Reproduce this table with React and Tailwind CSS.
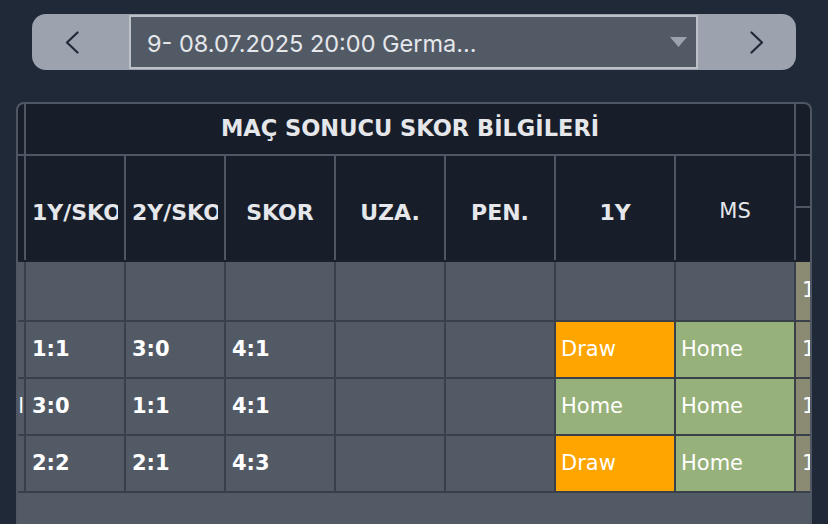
import React from 'react';

const COLS = 'grid-cols-[6px_98px_98px_108px_108px_108px_118px_118px_100px]';

const rows = [
  { h: 'h-[58px]', cells: ['', '', '', '', ''], left: '' },
  { h: 'h-[55px]', cells: ['1:1', '3:0', '4:1', '', ''], r1: 'Draw', ms: 'Home', left: '' },
  { h: 'h-[55px]', cells: ['3:0', '1:1', '4:1', '', ''], r1: 'Home', ms: 'Home', left: 'l' },
  { h: 'h-[55px]', cells: ['2:2', '2:1', '4:3', '', ''], r1: 'Draw', ms: 'Home', left: '' },
];

function resultBg(v) {
  if (v === 'Draw') return 'bg-[#ffa500]';
  if (v === 'Home') return 'bg-[#97b17a]';
  return 'bg-[#525a66]';
}

function Chevron({ dir }) {
  return (
    <svg width="14" height="23" viewBox="0 0 14 23" fill="none">
      <polyline
        points={dir === 'left' ? '12.5,1.5 2,11.5 12.5,21.5' : '1.5,1.5 12,11.5 1.5,21.5'}
        stroke="#1f2937"
        strokeWidth="2.2"
        strokeLinecap="round"
        strokeLinejoin="round"
      />
    </svg>
  );
}

export default function App() {
  return (
    <div className="w-[828px] h-[524px] overflow-hidden bg-[#1f2937] flex flex-col pt-[14px] font-['DejaVu_Sans',sans-serif]">
      {/* Maç seçici */}
      <div className="ml-[32px] w-[764px] h-[56px] shrink-0 rounded-[14px] bg-[#9ca3af] flex items-center">
        <div className="w-[97px] h-full flex items-center pl-[33px]">
          <Chevron dir="left" />
        </div>
        <div className="w-[569px] h-[54px] border-2 border-[#bcc0c7] bg-[#525a66] flex items-center justify-between pl-[16px] pr-[9px]">
          <span className="font-['Inter',sans-serif] text-[23.5px] text-[#e5e7eb] leading-none pt-[4px] whitespace-nowrap">
            9- 08.07.2025 20:00 Germa...
          </span>
          <svg width="17" height="10" viewBox="0 0 17 10">
            <polygon points="0,0 17,0 8.5,10" fill="#9ca3af" />
          </svg>
        </div>
        <div className="w-[98px] h-full flex items-center pl-[52px]">
          <Chevron dir="right" />
        </div>
      </div>

      {/* Tablo */}
      <div className="mt-[32px] ml-[16px] w-[796px] flex-1 border-2 border-b-0 border-[#4f5764] rounded-t-[8px] overflow-hidden bg-[#525a66] flex flex-col">
        <div className={`grid ${COLS} grid-rows-[50px_50px_52px] gap-[2px] bg-[#4f5764] shrink-0`}>
          <div className="bg-[#171e29]" />
          <div className="col-span-7 bg-[#171e29] flex items-center justify-center text-[22.5px] font-bold text-[#e5e7eb] whitespace-nowrap">
            MAÇ SONUCU SKOR BİLGİLERİ
          </div>
          <div className="bg-[#171e29]" />

          <div className="row-span-2 bg-[#171e29]" />
          {['1Y/SKOR', '2Y/SKOR', 'SKOR', 'UZA.', 'PEN.', '1Y'].map((t) => (
            <div
              key={t}
              className="row-span-2 bg-[#171e29] flex items-center pt-[8px] px-[6px] overflow-hidden"
            >
              <div className="w-full text-center text-[22px] font-bold text-[#e5e7eb] whitespace-nowrap overflow-hidden">
                {t}
              </div>
            </div>
          ))}
          <div className="row-span-2 bg-[#171e29] flex items-center justify-center pt-[8px] text-[21px] text-[#e5e7eb]">
            MS
          </div>
          <div className="bg-[#171e29]" />
          <div className="bg-[#171e29]" />
        </div>

        <div className="h-[2px] bg-[#1b212b] shrink-0" />

        <div className={`grid ${COLS} gap-[2px] bg-[#3a404a] pb-[2px] shrink-0`}>
          {rows.map((r, i) => (
            <React.Fragment key={i}>
              <div className={`${r.h} bg-[#525a66] flex items-center justify-end overflow-hidden text-[21px] text-white`}>
                {r.left}
              </div>
              {r.cells.map((c, j) => (
                <div
                  key={j}
                  className={`${r.h} bg-[#525a66] flex items-center px-[6px] text-[21px] font-bold text-white`}
                >
                  {c}
                </div>
              ))}
              <div className={`${r.h} ${resultBg(r.r1)} flex items-center px-[5px] text-[21px] text-white`}>
                {r.r1}
              </div>
              <div className={`${r.h} ${resultBg(r.ms)} flex items-center px-[5px] text-[21px] text-white`}>
                {r.ms}
              </div>
              <div className={`${r.h} bg-[#8b8b74] flex items-center px-[6px] text-[21px] text-white`}>
                1
              </div>
            </React.Fragment>
          ))}
        </div>

        <div className="flex-1 bg-[#525a66]" />
      </div>
    </div>
  );
}
